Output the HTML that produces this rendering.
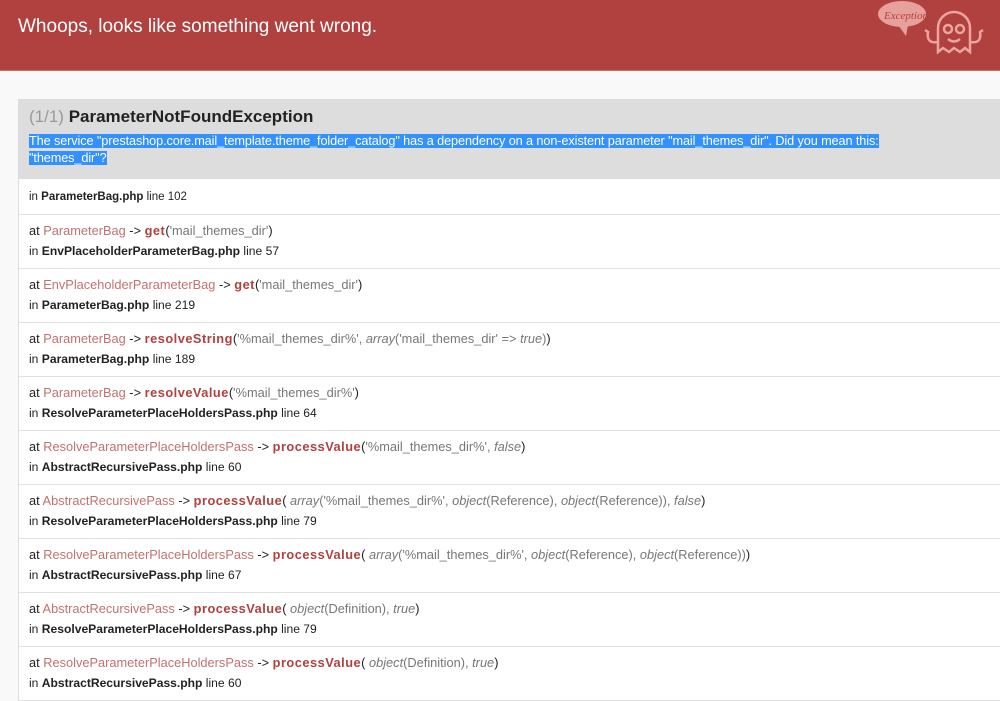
<!DOCTYPE html>
<html><head><meta charset="utf-8"><style>
body{margin:0;background:#f9f9f9;font-family:"Liberation Sans",Arial,sans-serif;width:1000px;height:692px;overflow:hidden;position:relative}
.hd{background:#b0413e;height:70px;position:relative;border-bottom:1px solid #c96b68}
.hd h1{margin:0;position:absolute;left:18px;top:16px;font-size:19px;font-weight:normal;color:#fff}
.box{position:absolute;left:18px;top:99px;width:1000px;border-left:1px solid #ddd}
.top{background:#ddd;padding:8px 10px 9px 10px;height:63px}
.top h2{margin:0;font-size:17px;color:#222;font-weight:bold}
.top h2 span{color:#999;font-weight:normal}
.msg{margin-top:6px;font-size:12.7px;line-height:17px;color:#fff;letter-spacing:-0.1px}
.msg span{background:#3390ff}
.row{background:#fff;border-bottom:1px solid #e0e0e0;padding:0 10px;font-size:12.1px;color:#222;height:54px;box-sizing:border-box;padding-top:6px;line-height:20px}
.row.one{height:36px;padding-top:8px;font-size:11.5px}
.cl{font-size:12.8px}
.c{color:#b0413e;opacity:.75}
.m{color:#b0413e;font-weight:bold;letter-spacing:0.5px}
.a{color:#777}
i{color:#777}
</style></head><body>
<div class="hd"><h1>Whoops, looks like something went wrong.</h1>
<svg style="position:absolute;left:876px;top:0px" width="124" height="62" viewBox="0 0 124 62" fill="none" stroke="#eaa5a1" stroke-width="2.5">
<ellipse cx="26" cy="14" rx="24" ry="13" fill="#e8a09c" stroke="none"/>
<path d="M22 25 L30 36 L32 25" fill="#e8a09c" stroke="none"/>
<text x="8" y="19" font-size="11" fill="#b0413e" stroke="none" font-style="italic" font-family="Liberation Serif">Exception!</text>
<path d="M62 52 V28 a16 16 0 0 1 32 0 V52 l-5 -4 -5 4 -6 -4 -5 4 -6 -4 z"/>
<circle cx="72" cy="29" r="4"/><circle cx="84" cy="29" r="4"/>
<path d="M72 39 q6 5 12 0"/>
<path d="M62 42 q-12 2 -10 -10 l-3 -2 M94 42 q12 2 10 -10 l3 -2"/>
</svg></div>
<div class="box">
<div class="top"><h2><span>(1/1)</span> ParameterNotFoundException</h2>
<div class="msg"><span>The service "prestashop.core.mail_template.theme_folder_catalog" has a dependency on a non-existent parameter "mail_themes_dir". Did you mean this:</span><br><span>"themes_dir"?</span></div></div>
<div class="row one">in <b>ParameterBag.php</b> line 102</div>
<div class="row"><span class="cl">at <span class="c">ParameterBag</span> -&gt; <span class="m">get</span>(<span class="a">'mail_themes_dir'</span>)</span><br>in <b>EnvPlaceholderParameterBag.php</b> line 57</div>
<div class="row"><span class="cl">at <span class="c">EnvPlaceholderParameterBag</span> -&gt; <span class="m">get</span>(<span class="a">'mail_themes_dir'</span>)</span><br>in <b>ParameterBag.php</b> line 219</div>
<div class="row"><span class="cl">at <span class="c">ParameterBag</span> -&gt; <span class="m">resolveString</span>(<span class="a">'%mail_themes_dir%', <i>array</i>('mail_themes_dir' =&gt; <i>true</i>)</span>)</span><br>in <b>ParameterBag.php</b> line 189</div>
<div class="row"><span class="cl">at <span class="c">ParameterBag</span> -&gt; <span class="m">resolveValue</span>(<span class="a">'%mail_themes_dir%'</span>)</span><br>in <b>ResolveParameterPlaceHoldersPass.php</b> line 64</div>
<div class="row"><span class="cl">at <span class="c">ResolveParameterPlaceHoldersPass</span> -&gt; <span class="m">processValue</span>(<span class="a">'%mail_themes_dir%', <i>false</i></span>)</span><br>in <b>AbstractRecursivePass.php</b> line 60</div>
<div class="row"><span class="cl">at <span class="c">AbstractRecursivePass</span> -&gt; <span class="m">processValue</span>(<span class="a"> <i>array</i>('%mail_themes_dir%', <i>object</i>(Reference), <i>object</i>(Reference)), <i>false</i></span>)</span><br>in <b>ResolveParameterPlaceHoldersPass.php</b> line 79</div>
<div class="row"><span class="cl">at <span class="c">ResolveParameterPlaceHoldersPass</span> -&gt; <span class="m">processValue</span>(<span class="a"> <i>array</i>('%mail_themes_dir%', <i>object</i>(Reference), <i>object</i>(Reference))</span>)</span><br>in <b>AbstractRecursivePass.php</b> line 67</div>
<div class="row"><span class="cl">at <span class="c">AbstractRecursivePass</span> -&gt; <span class="m">processValue</span>(<span class="a"> <i>object</i>(Definition), <i>true</i></span>)</span><br>in <b>ResolveParameterPlaceHoldersPass.php</b> line 79</div>
<div class="row"><span class="cl">at <span class="c">ResolveParameterPlaceHoldersPass</span> -&gt; <span class="m">processValue</span>(<span class="a"> <i>object</i>(Definition), <i>true</i></span>)</span><br>in <b>AbstractRecursivePass.php</b> line 60</div>
</div>
</body></html>
